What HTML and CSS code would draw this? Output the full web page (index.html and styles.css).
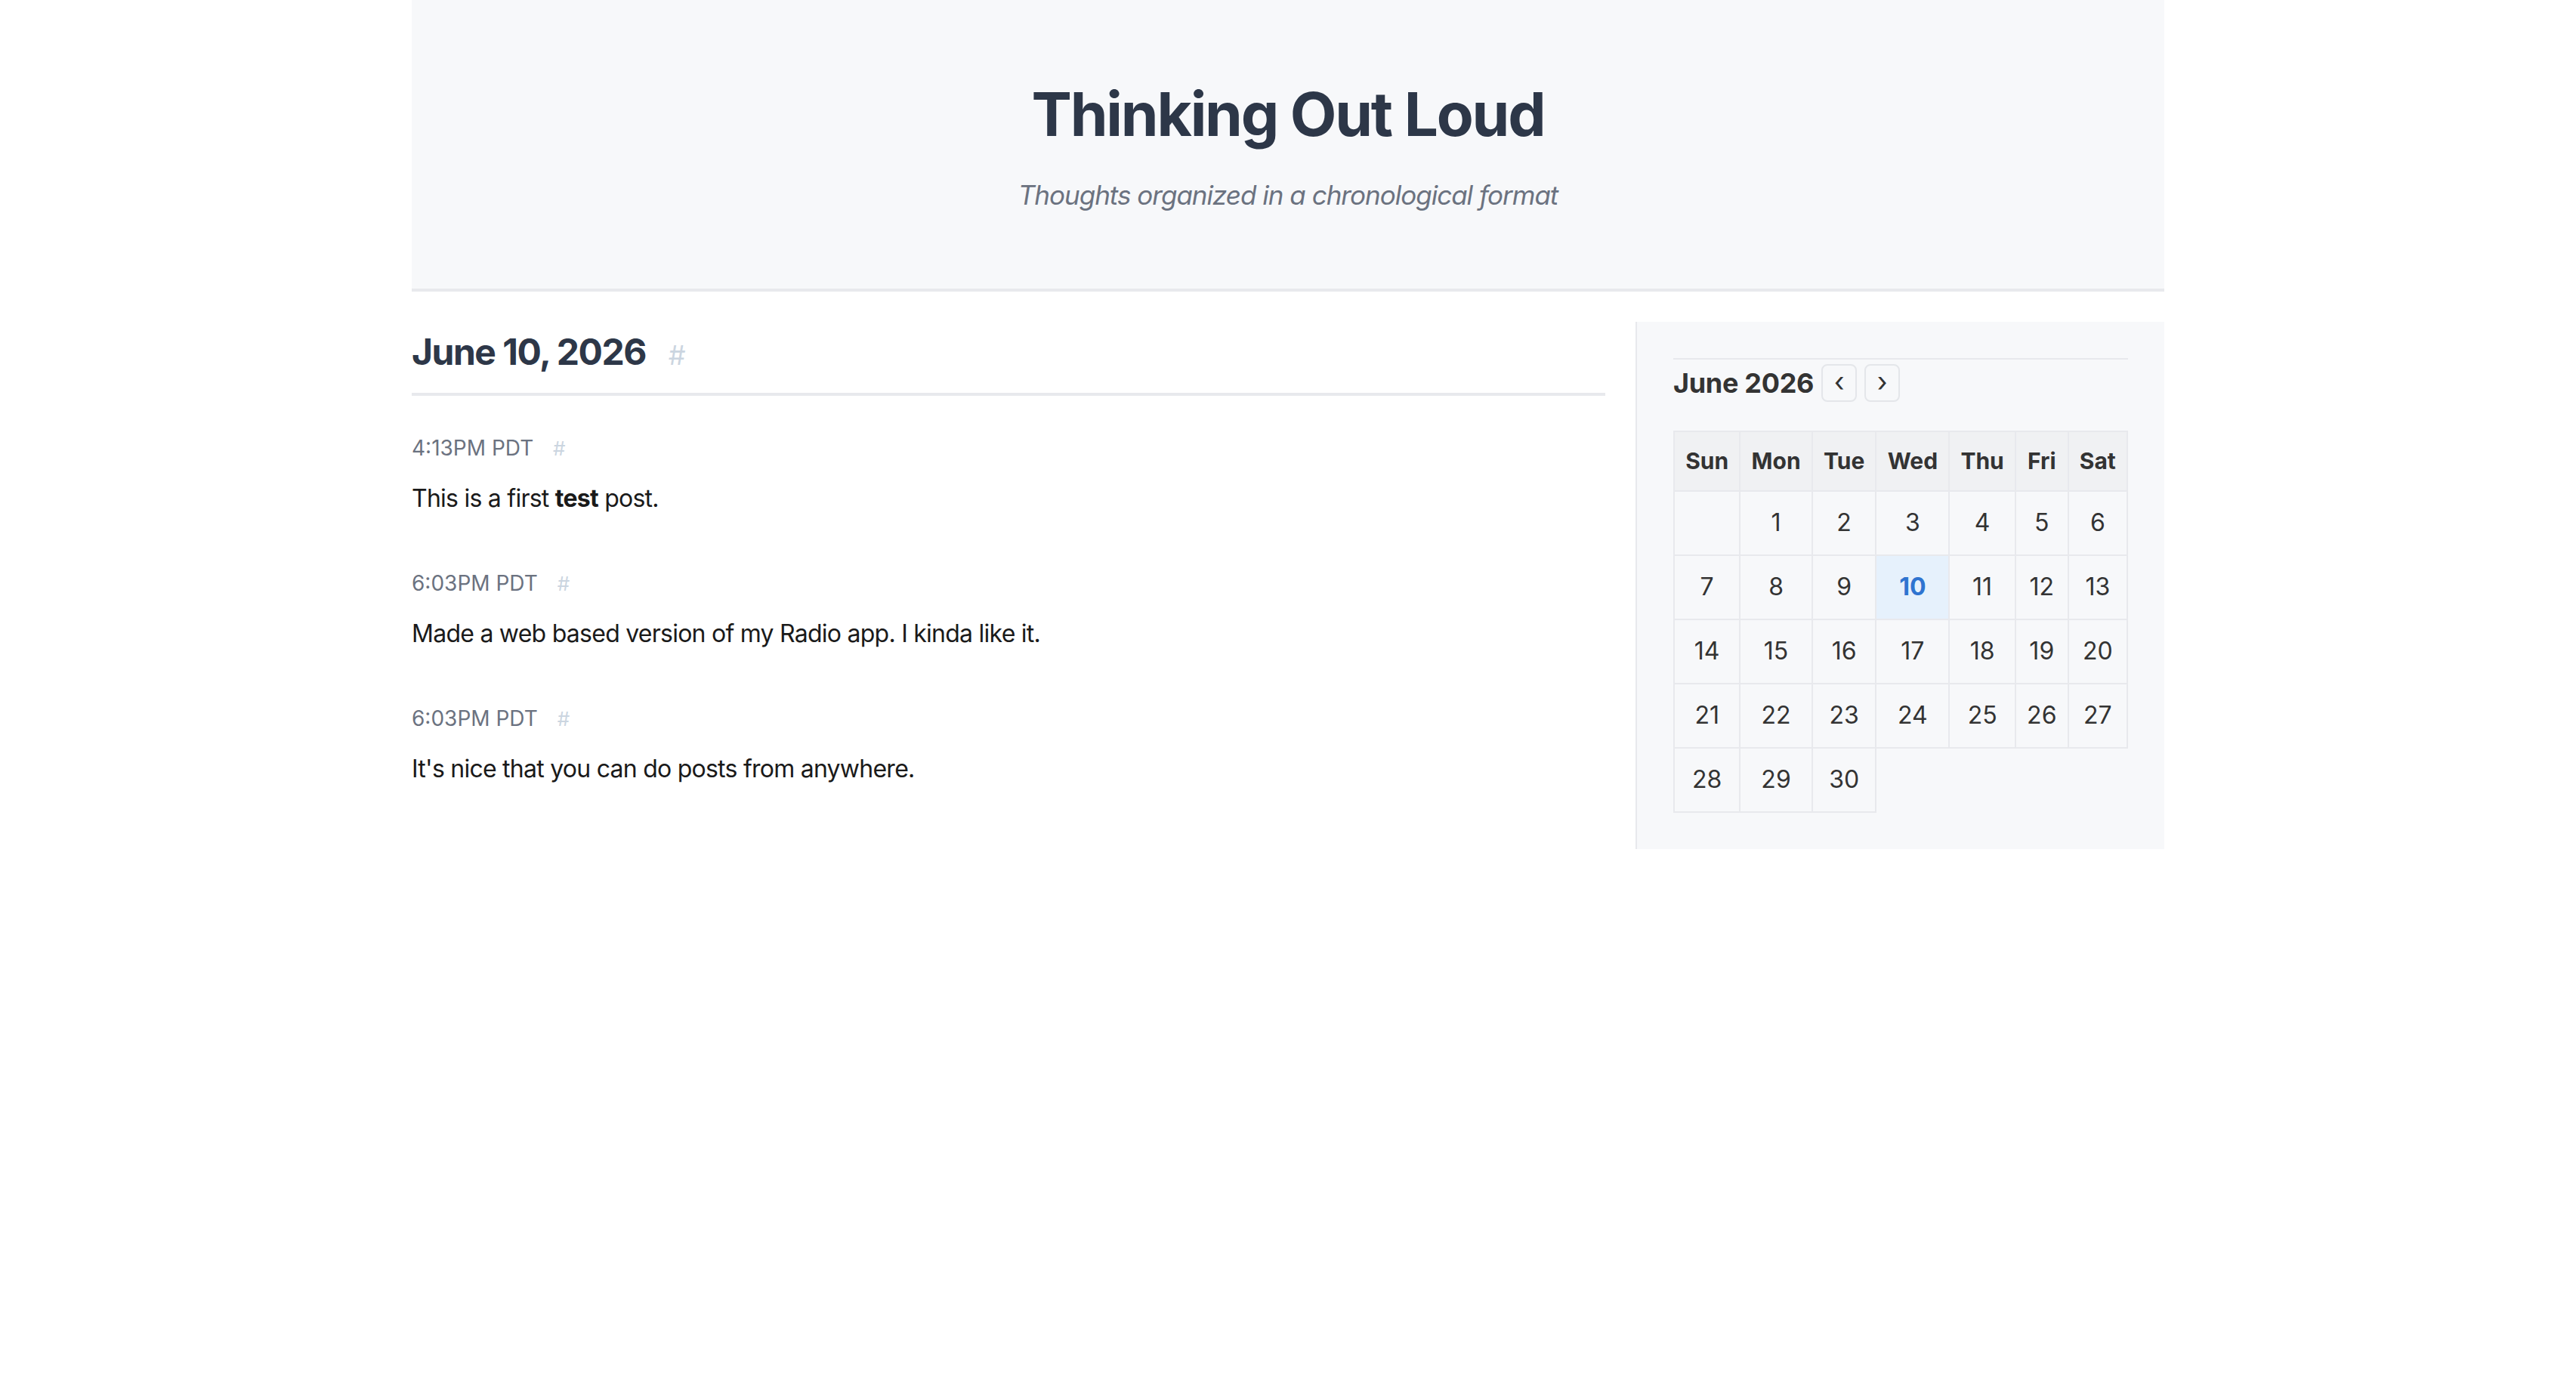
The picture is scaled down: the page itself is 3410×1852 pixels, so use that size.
FILE: index.html
```html
<!DOCTYPE html>
<html lang="en">
<head>
<meta charset="utf-8">
<title>Thinking Out Loud</title>
<link rel="stylesheet" href="styles.css">
</head>
<body>
<div class="page">
  <header class="site-header">
    <h1 class="site-title">Thinking Out Loud</h1>
    <p class="site-tagline">Thoughts organized in a chronological format</p>
  </header>
  <div class="layout">
    <main class="day">
      <h2 class="day-title">June 10, 2026 <a class="anchor anchor-lg" href="#">#</a></h2>
      <div class="posts">
        <article class="post">
          <div class="post-time">4:13PM PDT <a class="anchor" href="#">#</a></div>
          <p class="post-body">This is a first <strong>test</strong> post.</p>
        </article>
        <article class="post">
          <div class="post-time">6:03PM PDT <a class="anchor" href="#">#</a></div>
          <p class="post-body">Made a web based version of my Radio app. I kinda like it.</p>
        </article>
        <article class="post">
          <div class="post-time">6:03PM PDT <a class="anchor" href="#">#</a></div>
          <p class="post-body">It's nice that you can do posts from anywhere.</p>
        </article>
      </div>
    </main>
    <aside class="sidebar">
      <div class="calendar">
        <div class="cal-head">
          <span class="cal-month">June 2026</span>
          <button class="cal-btn">‹</button>
          <button class="cal-btn">›</button>
        </div>
        <table class="cal-table">
          <thead>
            <tr><th>Sun</th><th>Mon</th><th>Tue</th><th>Wed</th><th>Thu</th><th>Fri</th><th>Sat</th></tr>
          </thead>
          <tbody>
            <tr><td></td><td>1</td><td>2</td><td>3</td><td>4</td><td>5</td><td>6</td></tr>
            <tr><td>7</td><td>8</td><td>9</td><td class="today">10</td><td>11</td><td>12</td><td>13</td></tr>
            <tr><td>14</td><td>15</td><td>16</td><td>17</td><td>18</td><td>19</td><td>20</td></tr>
            <tr><td>21</td><td>22</td><td>23</td><td>24</td><td>25</td><td>26</td><td>27</td></tr>
            <tr><td>28</td><td>29</td><td>30</td></tr>
          </tbody>
        </table>
      </div>
    </aside>
  </div>
</div>
</body>
</html>
```

FILE: styles.css
```css
html, body {
  margin: 0;
  padding: 0;
  background: #ffffff;
}

body {
  font-family: "Inter", "Noto Sans", "Liberation Sans", sans-serif;
  color: #1a1a1a;
}

.page {
  max-width: 2320px;
  margin: 0 auto;
}

.site-header {
  background: #f7f8fa;
  border-bottom: 4px solid #e8e9ed;
  text-align: center;
  padding: 103px 0 97px;
}

.site-title {
  margin: 0;
  font-size: 80px;
  line-height: 96px;
  font-weight: 700;
  color: #2d3748;
  letter-spacing: -2.2px;
}

.site-tagline {
  margin: 32px 0 0;
  font-size: 35px;
  line-height: 54px;
  font-style: italic;
  color: #6b7280;
  letter-spacing: -1px;
}

.layout {
  display: flex;
  align-items: flex-start;
  gap: 40px;
  margin-top: 40px;
}

.day {
  flex: 1;
  min-width: 0;
}

.day-title {
  margin: 11px 0 0;
  padding-bottom: 21px;
  border-bottom: 4px solid #e8e9ed;
  font-size: 48px;
  line-height: 58px;
  font-weight: 700;
  color: #2d3748;
  letter-spacing: -1.5px;
}

.anchor {
  color: #cbd5e0;
  text-decoration: none;
  font-weight: 400;
  margin-left: 18px;
  letter-spacing: 0;
}

.anchor-lg {
  font-size: 36px;
  margin-left: 20px;
}

.posts {
  display: flex;
  flex-direction: column;
  gap: 67px;
  margin-top: 48px;
}

.post-time {
  font-size: 28px;
  line-height: 42px;
  color: #6b7280;
}

.post-time .anchor {
  font-size: 26px;
}

.post-body {
  margin: 21px 0 0;
  font-size: 32px;
  line-height: 48px;
  color: #1a1a1a;
  letter-spacing: -0.75px;
}

.post-body strong {
  font-weight: 700;
}

.sidebar {
  width: 700px;
  box-sizing: border-box;
  background: #f7f8fa;
  border-left: 2px solid #e8e9ed;
  padding: 48px;
}

.calendar {
  border-top: 2px solid #e8e9ed;
  color: #333333;
}

.cal-head {
  display: flex;
  align-items: center;
  gap: 10px;
  padding-top: 6px;
  height: 50px;
}

.cal-month {
  font-size: 36px;
  font-weight: 700;
  line-height: 50px;
  color: #333333;
  letter-spacing: -0.3px;
}

.cal-btn {
  width: 47px;
  height: 50px;
  box-sizing: border-box;
  border: 2px solid #e4e6ea;
  border-radius: 8px;
  background: transparent;
  color: #333333;
  font-family: inherit;
  font-size: 36px;
  line-height: 1;
  padding: 0 0 4px;
}

.cal-table {
  width: 100%;
  margin-top: 38px;
  border-collapse: collapse;
  text-align: center;
}

.cal-table th,
.cal-table td {
  border: 2px solid #e8e9ed;
}

.cal-table th {
  background: #f0f1f3;
  font-size: 30px;
  font-weight: 700;
  line-height: 45px;
  padding: 16px 14px 16px;
}

.cal-table td {
  font-size: 32px;
  line-height: 48px;
  padding: 17px 14px 18px;
}

.cal-table td.today {
  background: #e6f1fc;
  color: #2f74d0;
  font-weight: 700;
}
```
